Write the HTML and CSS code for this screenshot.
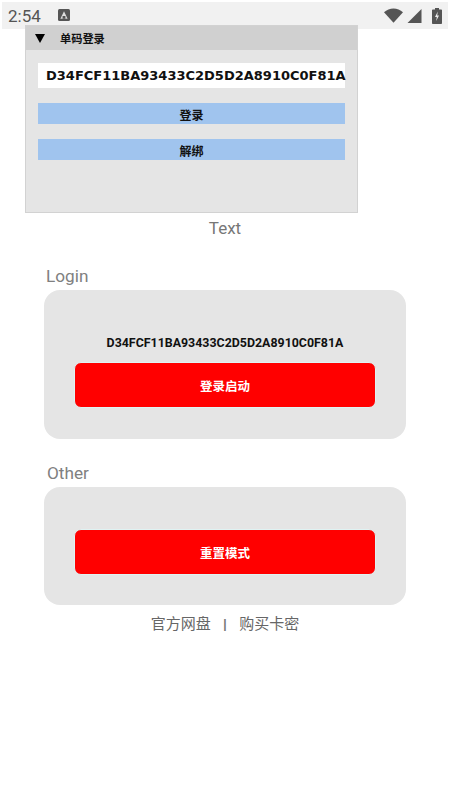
FILE: index.html
```html
<!DOCTYPE html>
<html lang="zh">
<head>
<meta charset="utf-8">
<title>Login</title>
<link rel="stylesheet" href="styles.css">
</head>
<body>
<header class="status">
  <div class="status-left">
    <span class="time">2:54</span>
    <svg class="notif" viewBox="0 0 12 12" aria-hidden="true"><rect width="12" height="12" rx="1.5" fill="#555"/><path d="M6 2.2 9.6 9.8H2.4Z" fill="#ddd"/><rect x="4.6" y="7" width="2.8" height="2.8" fill="#555"/></svg>
  </div>
  <div class="status-right">
    <svg class="wifi" viewBox="0 0 20 15" aria-hidden="true"><path d="M0 4.2C5.5-1.2 14.5-1.2 20 4.2L10 15Z" fill="#555"/></svg>
    <svg class="signal" viewBox="0 0 15 15" aria-hidden="true"><path d="M15 0V15H0Z" fill="#555"/></svg>
    <svg class="battery" viewBox="0 0 10 16" aria-hidden="true"><path d="M3 0H7V1.5H9.2A.8.8 0 0 1 10 2.3V15.2A.8.8 0 0 1 9.2 16H.8A.8.8 0 0 1 0 15.2V2.3A.8.8 0 0 1 .8 1.5H3Z" fill="#555"/><path d="M5.8 3.5 3 9H4.8L4.2 13 7 7.5H5.2Z" fill="#eee"/></svg>
  </div>
</header>

<section class="panel">
  <div class="panel-head"><span class="arrow"></span><span class="panel-title">单码登录</span></div>
  <div class="panel-body">
    <div class="key-input">D34FCF11BA93433C2D5D2A8910C0F81A</div>
    <button class="blue-btn">登录</button>
    <button class="blue-btn">解绑</button>
  </div>
</section>

<p class="caption">Text</p>

<p class="label login-label">Login</p>
<section class="card login-card">
  <p class="key-text">D34FCF11BA93433C2D5D2A8910C0F81A</p>
  <button class="red-btn">登录启动</button>
</section>

<p class="label other-label">Other</p>
<section class="card other-card">
  <button class="red-btn">重置模式</button>
</section>

<nav class="links"><a>官方网盘</a><span class="sep">|</span><a>购买卡密</a></nav>
</body>
</html>
```
FILE: styles.css
```css
* { box-sizing: border-box; }
html, body { margin: 0; padding: 0; }
body {
  width: 450px;
  height: 800px;
  overflow: hidden;
  background: #fff;
  padding-top: 2px;
  font-family: Roboto, "Noto Sans CJK SC", sans-serif;
}
p { margin: 0; }
button { display: block; border: 0; padding: 0; font-family: inherit; }

.status {
  height: 27px;
  margin: 0 2px;
  background: #f1f1f1;
  display: flex;
  align-items: center;
  justify-content: space-between;
  padding: 0 6px 0 6px;
}
.status-left, .status-right { display: flex; align-items: center; }
.time { font-size: 17px; color: #555; width: 50px; }
.notif { width: 12px; height: 12px; margin-bottom: 2px; }
.status-right { gap: 4px; }
.wifi { width: 19px; height: 15px; }
.signal { width: 15px; height: 14px; }
.battery { width: 10px; height: 16px; margin-left: 6px; }

.panel {
  width: 333px;
  height: 188px;
  margin: -4px 0 0 25px;
  position: relative;
  background: #e5e5e5;
  border: 1px solid #d2d2d2;
}
.panel-head {
  height: 24px;
  background: #d0d0d0;
  display: flex;
  align-items: center;
  padding-left: 9px;
}
.arrow {
  width: 0;
  height: 0;
  border-left: 5px solid transparent;
  border-right: 5px solid transparent;
  border-top: 9px solid #000;
  margin-right: 15px;
}
.panel-title { font-size: 11.2px; font-weight: 700; color: #111; }
.panel-body { padding: 13px 12px 0 12px; }
.key-input {
  height: 25px;
  background: #fff;
  padding-left: 8px;
  font-family: "DejaVu Sans", sans-serif;
  font-size: 13px;
  font-weight: 700;
  line-height: 25px;
  color: #111;
  white-space: nowrap;
}
.blue-btn {
  width: 100%;
  height: 21px;
  margin-top: 15px;
  padding-top: 2px;
  background: #a0c4ee;
  font-size: 12px;
  font-weight: 700;
  color: #111;
}
.blue-btn + .blue-btn { margin-top: 15px; }

.caption {
  margin-top: 4px;
  text-align: center;
  font-size: 17px;
  line-height: 22px;
  color: #777;
}
.label { font-size: 17.2px; line-height: 22px; color: #808080; }
.login-label { margin: 26px 0 0 46px; }
.other-label { margin: 23px 0 0 47px; }

.card {
  width: 362px;
  margin: 3px 0 0 44px;
  background: #e5e5e5;
  border-radius: 16px;
  padding: 0 30px;
}
.login-card { height: 149px; padding-top: 45px; }
.other-card { height: 118px; padding-top: 42px; }
.key-text {
  text-align: center;
  font-size: 12.4px;
  font-weight: 700;
  line-height: 16px;
  color: #111;
  white-space: nowrap;
  margin-bottom: 11px;
}
.red-btn {
  width: 302px;
  height: 46px;
  padding-top: 1px;
  background: #f00;
  border: 1px solid #dff3f3;
  border-radius: 7px;
  color: #fff;
  font-size: 12.5px;
  font-weight: 700;
}
.links {
  margin-top: 9px;
  display: flex;
  justify-content: center;
  align-items: center;
  font-size: 15px;
  line-height: 20px;
  color: #666;
}
.sep { font-family: "Liberation Sans", sans-serif; font-size: 12px; font-weight: 700; color: #777; margin: 0 12.5px; }
```
